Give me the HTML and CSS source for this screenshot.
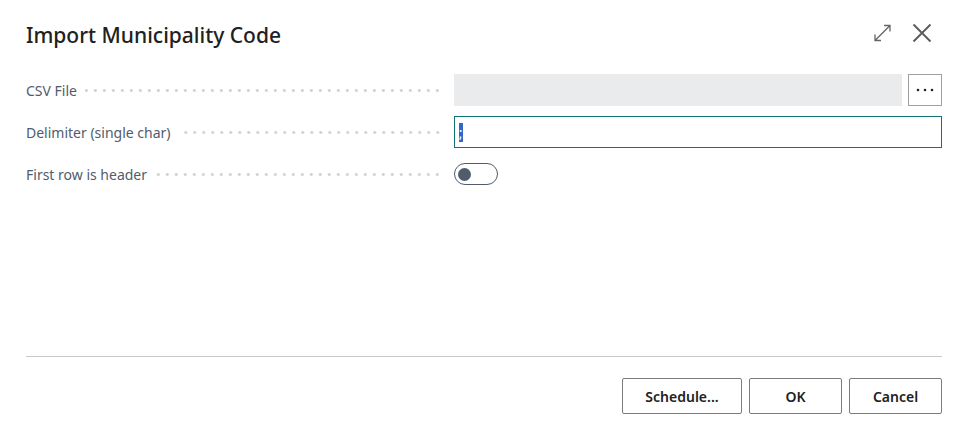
FILE: index.html
```html
<!DOCTYPE html>
<html lang="en">
<head>
    <meta charset="UTF-8">
    <meta name="viewport" content="width=device-width, initial-scale=1.0">
    <title>Import Municipality Code</title>
    <link rel="stylesheet" href="styles.css">
</head>
<body>
    <form class="dialog" id="importForm">
        <header class="dialog-header">
            <h1>Import Municipality Code</h1>
            <div class="dialog-actions">
                <button type="button" class="icon-btn" aria-label="Expand">
                    <svg width="20" height="20" viewBox="0 0 20 20" fill="none" stroke="#666" stroke-width="1.3">
                        <path d="M3 17.5L18 2.5M12 2.5h6v6M3 11.5v6h6"/>
                    </svg>
                </button>
                <button type="button" class="icon-btn" aria-label="Close">
                    <svg width="20" height="20" viewBox="0 0 20 20" fill="none" stroke="#5c5c5c" stroke-width="1.9">
                        <path d="M1.5 1.5l17 17M18.5 1.5l-17 17"/>
                    </svg>
                </button>
            </div>
        </header>

        <main class="fields">
            <div class="field">
                <label class="field-label" for="csvFile">CSV File</label>
                <div class="field-control">
                    <input type="text" class="text-input" id="csvFile" readonly>
                    <button type="button" class="lookup-btn" aria-label="Choose file">
                        <svg width="18" height="4" viewBox="0 0 18 4" fill="#222">
                            <circle cx="2" cy="2" r="1.3"/>
                            <circle cx="9" cy="2" r="1.3"/>
                            <circle cx="16" cy="2" r="1.3"/>
                        </svg>
                    </button>
                </div>
            </div>
            <div class="field">
                <label class="field-label" for="delimiter">Delimiter (single char)</label>
                <div class="field-control">
                    <input type="text" class="text-input" id="delimiter" value=";" maxlength="1">
                </div>
            </div>
            <div class="field">
                <label class="field-label" for="firstRow">First row is header</label>
                <div class="field-control">
                    <input type="checkbox" class="switch" id="firstRow" role="switch">
                </div>
            </div>
        </main>

        <footer class="dialog-footer">
            <button type="button" class="btn btn-wide">Schedule...</button>
            <button type="submit" class="btn">OK</button>
            <button type="button" class="btn">Cancel</button>
        </footer>
    </form>

    <script>
        const delimiter = document.getElementById('delimiter');
        delimiter.focus();
        delimiter.select();

        document.getElementById('importForm').addEventListener('submit', function(e) {
            e.preventDefault();
        });
    </script>
</body>
</html>
```
FILE: styles.css
```css
* {
    margin: 0;
    padding: 0;
    box-sizing: border-box;
}
body {
    font-family: 'Noto Sans', 'Open Sans', sans-serif;
    font-size: 14px;
    color: #212121;
    background: #fff;
}
button,
input {
    font: inherit;
    color: inherit;
}
button {
    cursor: pointer;
}
.dialog {
    min-height: 100vh;
    display: flex;
    flex-direction: column;
    padding: 20px 25px 23px 26px;
}
.dialog-header {
    display: flex;
    align-items: center;
    justify-content: space-between;
    height: 30px;
    margin-bottom: 24px;
}
.dialog-header h1 {
    font-size: 21px;
    font-weight: 500;
    line-height: 30px;
}
.dialog-actions {
    display: flex;
    gap: 20px;
    padding: 0 10px 4px 0;
}
.icon-btn {
    display: flex;
    border: none;
    background: none;
}
.fields {
    flex: 1;
    display: flex;
    flex-direction: column;
    gap: 10px;
}
.field {
    display: grid;
    grid-template-columns: 23fr 27fr;
    column-gap: 12px;
    align-items: center;
    min-height: 32px;
}
.field-label {
    display: flex;
    align-items: center;
    gap: 8px;
    color: #505c6d;
}
/* dotted leader between the caption and its control */
.field-label::after {
    content: '';
    flex: 1;
    height: 3px;
    background: radial-gradient(circle, #cfd2d5 1px, transparent 2px) right center / 9px 3px repeat-x;
}
.field-control {
    display: flex;
    gap: 6px;
}
.text-input {
    flex: 1;
    min-width: 0;
    height: 32px;
    padding: 0 4px;
    border: 1px solid #8a8a8a;
    outline: none;
}
.text-input:focus {
    border-color: #0f7377;
}
.text-input:read-only {
    border-color: #eaebed;
    background: #eaebed;
}
.text-input::selection {
    background: #3367c5;
    color: #fff;
}
.lookup-btn {
    display: flex;
    align-items: center;
    justify-content: center;
    width: 34px;
    height: 32px;
    border: 1px solid #a0a0a0;
    background: #fff;
}
.switch {
    appearance: none;
    display: flex;
    align-items: center;
    width: 44px;
    height: 22px;
    padding: 0 3px;
    border: 1px solid #505c6d;
    border-radius: 11px;
    cursor: pointer;
}
.switch::before {
    content: '';
    width: 13px;
    height: 13px;
    border-radius: 50%;
    background: #505c6d;
}
.switch:checked {
    justify-content: flex-end;
}
.dialog-footer {
    display: flex;
    justify-content: flex-end;
    gap: 7px;
    padding-top: 21px;
    border-top: 1px solid #c8c8c8;
}
.btn {
    min-width: 93px;
    height: 36px;
    border: 1px solid #7c7c7c;
    border-radius: 2px;
    background: #fff;
    font-weight: 600;
}
.btn-wide {
    min-width: 120px;
}
```
